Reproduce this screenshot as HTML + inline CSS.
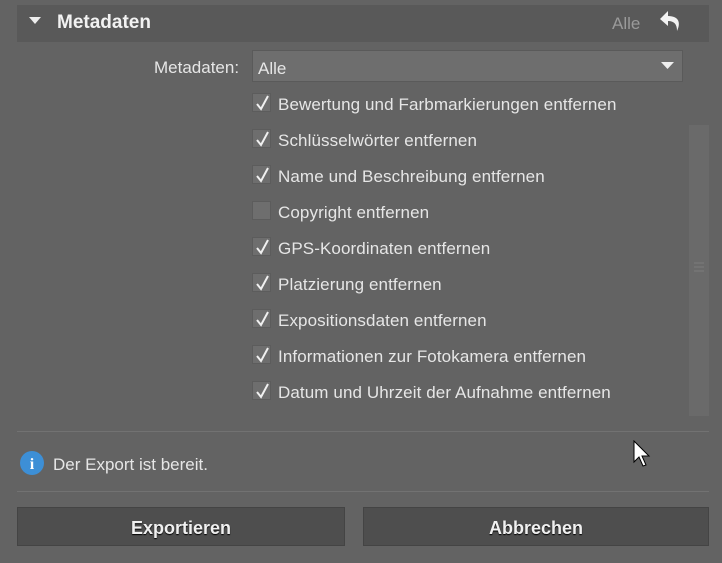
<!DOCTYPE html>
<html><head><meta charset="utf-8"><style>
*{margin:0;padding:0;box-sizing:border-box}
body{width:722px;height:563px;background:#636363;font-family:"Liberation Sans",sans-serif;color:#e6e6e6;position:relative;overflow:hidden;font-size:17px}
.abs{position:absolute}
.hdr{left:17px;top:5px;width:692px;height:37px;background:#595959}
.row{position:absolute;left:252px;height:20px;line-height:20px;white-space:nowrap}
.cb{position:absolute;left:0;top:0;width:19px;height:19px;background:#6e6e6e;border:1px solid #5c5c5c}
.cb svg{position:absolute;left:2px;top:1px}
.row span{position:absolute;left:26px;top:2px;letter-spacing:0.1px}
.btn{top:507px;height:39px;background:#4e4e4e;border:1px solid #444;text-align:center;line-height:40px;font-weight:bold;font-size:18px;color:#f0f0f0;text-shadow:0 1px 1px #000}
.sep{left:17px;width:692px;height:1px;background:#727272}
</style></head><body>
<div class="abs hdr"></div>
<svg class="abs" style="left:29px;top:17px" width="12" height="8"><path d="M0 0H12L6 7Z" fill="#eee"/></svg>
<div class="abs" style="left:57px;top:12px;font-weight:bold;font-size:19px;color:#f2f2f2">Metadaten</div>
<div class="abs" style="left:612px;top:14px;font-size:17px;color:#9a9a9a">Alle</div>
<svg class="abs" style="left:659px;top:9px" width="24" height="26" viewBox="0 0 24 26"><path d="M9 2L1 10L9 17V12C15 12 18 15 18 22C22 14 20 7 9 7Z" fill="#f2f2f2"/></svg>
<div class="abs" style="left:154px;top:58px;color:#e6e6e6">Metadaten:</div>
<div class="abs" style="left:252px;top:50px;width:431px;height:32px;background:#6e6e6e;border:1px solid #5a5a5a"></div>
<div class="abs" style="left:258px;top:59px">Alle</div>
<svg class="abs" style="left:661px;top:62px" width="13" height="8"><path d="M0 0H13L6.5 7Z" fill="#eee"/></svg>
<div class="abs" style="left:689px;top:125px;width:20px;height:291px;background:#6a6a6a"></div>
<svg class="abs" style="left:694px;top:262px" width="10" height="12"><path d="M0 1H10M0 5H10M0 9H10" stroke="#7c7c7c"/></svg>

<div class="row" style="top:93px"><div class="cb"><svg width="15" height="16"><path d="M2 9L6 14L13 1" stroke="#f0f0f0" stroke-width="2" fill="none"/></svg></div><span>Bewertung und Farbmarkierungen entfernen</span></div>
<div class="row" style="top:129px"><div class="cb"><svg width="15" height="16"><path d="M2 9L6 14L13 1" stroke="#f0f0f0" stroke-width="2" fill="none"/></svg></div><span>Schlüsselwörter entfernen</span></div>
<div class="row" style="top:165px"><div class="cb"><svg width="15" height="16"><path d="M2 9L6 14L13 1" stroke="#f0f0f0" stroke-width="2" fill="none"/></svg></div><span>Name und Beschreibung entfernen</span></div>
<div class="row" style="top:201px"><div class="cb"></div><span>Copyright entfernen</span></div>
<div class="row" style="top:237px"><div class="cb"><svg width="15" height="16"><path d="M2 9L6 14L13 1" stroke="#f0f0f0" stroke-width="2" fill="none"/></svg></div><span>GPS-Koordinaten entfernen</span></div>
<div class="row" style="top:273px"><div class="cb"><svg width="15" height="16"><path d="M2 9L6 14L13 1" stroke="#f0f0f0" stroke-width="2" fill="none"/></svg></div><span>Platzierung entfernen</span></div>
<div class="row" style="top:309px"><div class="cb"><svg width="15" height="16"><path d="M2 9L6 14L13 1" stroke="#f0f0f0" stroke-width="2" fill="none"/></svg></div><span>Expositionsdaten entfernen</span></div>
<div class="row" style="top:345px"><div class="cb"><svg width="15" height="16"><path d="M2 9L6 14L13 1" stroke="#f0f0f0" stroke-width="2" fill="none"/></svg></div><span>Informationen zur Fotokamera entfernen</span></div>
<div class="row" style="top:381px"><div class="cb"><svg width="15" height="16"><path d="M2 9L6 14L13 1" stroke="#f0f0f0" stroke-width="2" fill="none"/></svg></div><span>Datum und Uhrzeit der Aufnahme entfernen</span></div>

<div class="abs sep" style="top:431px"></div>
<svg class="abs" style="left:20px;top:451px" width="24" height="24"><circle cx="12" cy="12" r="12" fill="#3d8fd6"/><text x="12" y="18" text-anchor="middle" font-family="Liberation Serif" font-weight="bold" font-size="16" fill="#fff">i</text></svg>
<div class="abs" style="left:53px;top:455px">Der Export ist bereit.</div>
<svg class="abs" style="left:633px;top:440px" width="20" height="30"><path d="M1 1V22L6 17L10 26L13 25L9 16H16Z" fill="#fff" stroke="#000"/></svg>
<div class="abs sep" style="top:491px"></div>
<div class="abs btn" style="left:17px;width:328px">Exportieren</div>
<div class="abs btn" style="left:363px;width:346px">Abbrechen</div>
</body></html>
